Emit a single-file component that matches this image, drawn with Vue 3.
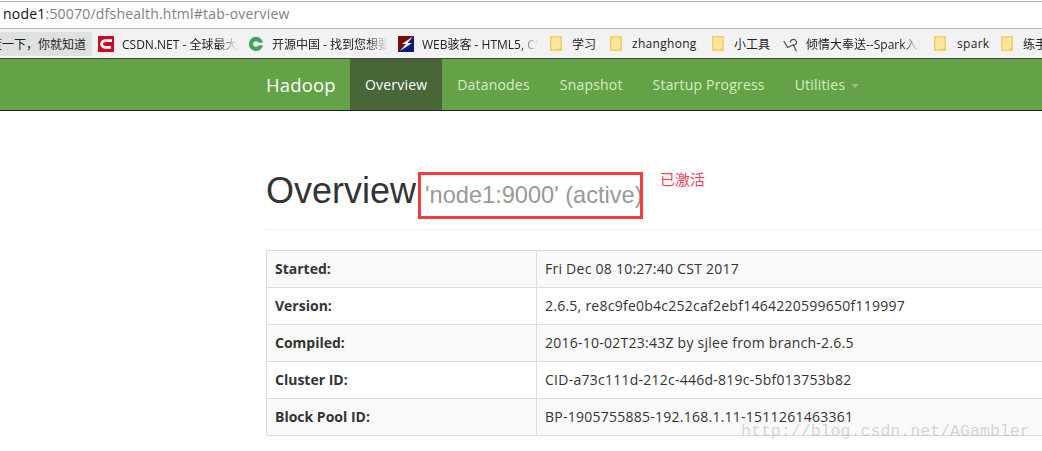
<template>
  <div class="page">
    <div class="address-bar">
      <span class="host">node1</span><span class="url-rest">:50070/dfshealth.html#tab-overview</span>
    </div>

    <div class="bookmarks">
      <div class="bm bm-current"><span class="first">百度一下，你就知道</span></div>
      <div class="bm csdn">
        <svg width="16" height="16" viewBox="0 0 16 16">
          <rect width="16" height="16" fill="#c90d1c" />
          <path d="M14 4.6H7.5C5.4 4.6 3.6 6 3.6 8s1.8 3.4 3.9 3.4H13" fill="none" stroke="#fff" stroke-width="2.8" />
        </svg>
        <span class="bm-clip w-csdn">CSDN.NET - 全球最大</span>
      </div>
      <div class="bm oschina">
        <svg width="16" height="16" viewBox="0 0 16 16">
          <circle cx="8" cy="8" r="5" fill="none" stroke="#3fa75b" stroke-width="4.4" />
          <rect x="9" y="6.7" width="7" height="2.6" fill="#f2f2f2" />
        </svg>
        <span class="bm-clip w-osc">开源中国 - 找到您想要的</span>
      </div>
      <div class="bm webjx">
        <svg width="16" height="16" viewBox="0 0 16 16">
          <rect width="16" height="16" fill="#0b1a7a" />
          <path d="M0 0H16L0 16Z" fill="#7a0a10" />
          <path d="M15 .5 4 8h4L2 15 14 7H9.5Z" fill="#fff" />
        </svg>
        <span class="bm-clip w-web">WEB骇客 - HTML5, CSS</span>
      </div>
      <div v-for="f in firstFolders" :key="f.name" class="bm folder-item" :class="f.cls">
        <svg width="12" height="15" viewBox="0 0 12 15"><path d="M.75.75h10.5v13.5H.75Z" fill="#fde69a" stroke="#f2cd6a" stroke-width="1.5" /><path d="M8.5 11.5h3v3h-3Z" fill="#f2cd6a" /></svg>
        <span class="f-name">{{ f.name }}</span>
      </div>
      <div class="bm spark-item">
        <svg width="15" height="16" viewBox="0 0 15 16">
          <path d="M.8 5 4.5 11.5 11 8.5M7.5 6.5a3 3 0 1 1 3 2.8l3 6" fill="none" stroke="#555" stroke-width="1.3" />
        </svg>
        <span class="bm-clip w-spark">倾情大奉送--Spark入门</span>
      </div>
      <div v-for="f in lastFolders" :key="f.name" class="bm folder-item" :class="f.cls">
        <svg width="12" height="15" viewBox="0 0 12 15"><path d="M.75.75h10.5v13.5H.75Z" fill="#fde69a" stroke="#f2cd6a" stroke-width="1.5" /><path d="M8.5 11.5h3v3h-3Z" fill="#f2cd6a" /></svg>
        <span class="f-name">{{ f.name }}</span>
      </div>
    </div>

    <nav class="navbar">
      <div class="brand">Hadoop</div>
      <a v-for="item in navItems" :key="item" class="nav-link" :class="{ active: item === 'Overview' }">{{ item }}</a>
      <a class="nav-link">Utilities<span class="caret"></span></a>
    </nav>

    <div class="container">
      <div class="page-header">
        <h1>Overview <small>'node1:9000' (active)</small></h1>
      </div>

      <table class="info">
        <tbody>
          <tr v-for="row in rows" :key="row[0]">
            <th>{{ row[0] }}</th>
            <td>{{ row[1] }}</td>
          </tr>
        </tbody>
      </table>
    </div>

    <div class="red-box"></div>
    <div class="note">已激活</div>
    <div class="watermark">http://blog.csdn.net/AGambler</div>
  </div>
</template>

<script setup>
const navItems = ['Overview', 'Datanodes', 'Snapshot', 'Startup Progress']

const firstFolders = [
  { name: '学习', cls: 'f-xuexi' },
  { name: 'zhanghong', cls: 'f-zhang' },
  { name: '小工具', cls: 'f-tools' }
]
const lastFolders = [
  { name: 'spark', cls: 'f-spark' },
  { name: '练手', cls: 'f-lian' }
]

const rows = [
  ['Started:', 'Fri Dec 08 10:27:40 CST 2017'],
  ['Version:', '2.6.5, re8c9fe0b4c252caf2ebf1464220599650f119997'],
  ['Compiled:', '2016-10-02T23:43Z by sjlee from branch-2.6.5'],
  ['Cluster ID:', 'CID-a73c111d-212c-446d-819c-5bf013753b82'],
  ['Block Pool ID:', 'BP-1905755885-192.168.1.11-1511261463361']
]
</script>

<style>
html, body {
  margin: 0;
  background: #fff;
  overflow: hidden;
}
</style>

<style scoped>
.page {
  position: relative;
  width: 1042px;
  height: 451px;
  overflow: hidden;
  background: #fff;
  font-family: "Open Sans", "Noto Sans CJK SC", sans-serif;
  color: #333;
}
.address-bar {
  box-sizing: border-box;
  height: 28px;
  margin-top: 1px;
  border-top: 1px solid #b4b4b4;
  border-bottom: 1px solid #b4b4b4;
  padding-left: 3px;
  font-size: 14px;
  letter-spacing: 0.21px;
  line-height: 24px;
  white-space: nowrap;
}
.host {
  color: #111;
}
.url-rest {
  color: #808080;
}
.bookmarks {
  display: flex;
  align-items: center;
  height: 29px;
  background: #f2f2f2;
  border-bottom: 1px solid #444;
  font-size: 12px;
  color: #222;
  white-space: nowrap;
  overflow: hidden;
}
.bm {
  display: flex;
  align-items: center;
  flex: none;
  height: 24px;
}
.bm-current {
  width: 92px;
  background: #dfe1e1;
  overflow: hidden;
  justify-content: flex-end;
  padding-right: 6px;
  box-sizing: border-box;
}
.first {
  flex: none;
}
.bm-clip {
  display: block;
  overflow: hidden;
  -webkit-mask-image: linear-gradient(to right, #000 84%, transparent);
  mask-image: linear-gradient(to right, #000 84%, transparent);
}
.csdn {
  margin-left: 6px;
  gap: 8px;
}
.w-csdn { width: 115px; }
.oschina {
  margin-left: 11px;
  gap: 8px;
}
.w-osc { width: 115px; }
.webjx {
  margin-left: 11px;
  gap: 8px;
}
.w-web { width: 116px; }
.folder-item {
  gap: 10px;
}
.f-name {
  display: block;
  overflow: hidden;
}
.f-xuexi { margin-left: 12px; }
.f-xuexi .f-name { width: 24px; }
.f-zhang { margin-left: 14px; }
.f-zhang .f-name { width: 66px; letter-spacing: 0.3px; }
.f-tools { margin-left: 14px; }
.f-tools .f-name { width: 37px; }
.spark-item {
  margin-left: 12px;
  gap: 8px;
}
.w-spark { width: 114px; }
.f-spark { margin-left: 14px; }
.f-spark .f-name { width: 33px; padding-left: 1px; letter-spacing: 0.3px; }
.f-lian { margin-left: 11px; }
.navbar {
  display: flex;
  box-sizing: border-box;
  height: 52px;
  padding-left: 266px;
  background: #65a147;
  border-bottom: 1px solid #222;
  font-size: 14px;
  letter-spacing: 0.19px;
}
.brand {
  width: 84px;
  font-size: 18.5px;
  line-height: 51px;
  letter-spacing: 0.15px;
  color: #fff;
}
.nav-link {
  padding: 0 15px;
  line-height: 51px;
  color: #d6efc4;
}
.nav-link.active {
  background: #486637;
  color: #fff;
}
.caret {
  display: inline-block;
  margin-left: 6px;
  vertical-align: middle;
  border-top: 4px solid #a4b49a;
  border-left: 4px solid transparent;
  border-right: 4px solid transparent;
}
.container {
  width: 1170px;
  padding-left: 266px;
}
.page-header {
  height: 119px;
  box-sizing: border-box;
  border-bottom: 1px solid #eee;
  padding-top: 60px;
}
h1 {
  margin: 0;
  font-family: "Liberation Sans", Arial, sans-serif;
  font-size: 36px;
  font-weight: 500;
  line-height: 40px;
  color: #333;
}
small {
  margin-left: -1px;
  font-size: 23.6px;
  font-weight: 400;
  color: #999;
}
.info {
  width: 100%;
  margin-top: 20px;
  border-collapse: collapse;
  font-size: 14px;
  letter-spacing: 0.25px;
}
.info th, .info td {
  box-sizing: border-box;
  height: 37px;
  padding: 0 8px 2px;
  border: 1px solid #ddd;
  text-align: left;
}
.info th {
  width: 270px;
  font-weight: 700;
  letter-spacing: 0;
}
.info tr:nth-child(odd) {
  background: #f9f9f9;
}
.red-box {
  position: absolute;
  left: 418px;
  top: 172px;
  width: 219px;
  height: 41px;
  border: 3px solid #f83a3a;
}
.note {
  position: absolute;
  left: 660px;
  top: 169px;
  font-family: "Noto Sans CJK SC", sans-serif;
  font-size: 15px;
  line-height: 20px;
  color: #f5405a;
}
.watermark {
  position: absolute;
  left: 741px;
  top: 421px;
  font-family: "Liberation Mono", monospace;
  font-size: 16.6px;
  line-height: 22px;
  color: rgba(130, 130, 130, 0.32);
  white-space: nowrap;
}
</style>
